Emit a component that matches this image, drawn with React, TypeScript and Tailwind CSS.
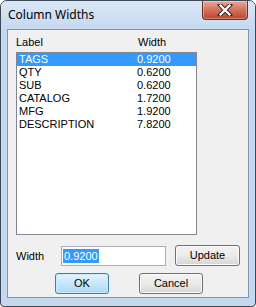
import React from 'react';

const rows = [
    { label: 'TAGS', width: '0.9200' },
    { label: 'QTY', width: '0.6200' },
    { label: 'SUB', width: '0.6200' },
    { label: 'CATALOG', width: '1.7200' },
    { label: 'MFG', width: '1.9200' },
    { label: 'DESCRIPTION', width: '7.8200' },
];

const sans = { fontFamily: '"Liberation Sans", Arial, sans-serif' };

const CloseButton = () => (
    <div className="relative w-[46px] h-[19px] rounded-b-[4px] border border-t-0 border-[#6d2a23] bg-gradient-to-b from-[#e9a99b] via-[#d3705c] to-[#c0432c] shadow-[inset_0_0_0_1px_rgba(255,255,255,0.35)] flex items-center justify-center">
        <svg width="16" height="12" viewBox="0 0 16 12">
            <path d="M3 1 L13 11 M13 1 L3 11" stroke="#3a2a2a" strokeWidth="4.2" strokeLinecap="square" />
            <path d="M3.5 1.5 L12.5 10.5 M12.5 1.5 L3.5 10.5" stroke="#ffffff" strokeWidth="2.2" strokeLinecap="square" />
        </svg>
    </div>
);

const Btn = ({ label, primary, w }: { label: string; primary?: boolean; w: string }) => (
    <div
        className={`${w} h-[21px] rounded-[3px] border flex items-center justify-center text-[11px] text-black ${
            primary
                ? 'border-[#3c7fb1] bg-gradient-to-b from-[#e5f4fc] to-[#a9daf5] shadow-[inset_0_0_0_1px_#c4ecff]'
                : 'border-[#707070] bg-gradient-to-b from-[#f2f2f2] via-[#ebebeb] to-[#d5d5d5] shadow-[inset_0_0_0_1px_#fcfcfc]'
        }`}
        style={sans}
    >
        {label}
    </div>
);

export default function App() {
    return (
        <div className="w-[256px] h-[307px] bg-white">
            <div className="w-[256px] h-[307px] rounded-t-[7px] rounded-b-[4px] border border-[#3a4858] bg-[#c4d8ef] flex flex-col">
                <div className="h-[28px] shrink-0 flex items-start justify-between rounded-t-[6px] bg-gradient-to-b from-[#dbe8f6] to-[#c6d9ef]">
                    <span className="pl-[7px] pt-[5px] text-[12px] text-black" style={{ fontFamily: '"Noto Sans", "Open Sans", sans-serif' }}>
                        Column Widths
                    </span>
                    <div className="mr-[7px]">
                        <CloseButton />
                    </div>
                </div>
                <div className="flex-1 px-[6px] pb-[8px] flex">
                    <div className="flex-1 border border-[#8095ad] bg-[#f0f0f0] flex flex-col text-[11px] text-black" style={sans}>
                        <div className="h-[22px] pl-[8px] pt-[4px] flex">
                            <span className="w-[122px]">Label</span>
                            <span>Width</span>
                        </div>
                        <div className="ml-[8px] w-[181px] h-[183px] border border-[#828790] bg-white">
                            {rows.map((r, i) => (
                                <div
                                    key={r.label}
                                    className={`h-[13px] leading-[13px] flex pl-[2px] ${i === 0 ? 'bg-[#3399ff] text-white' : ''}`}
                                >
                                    <span className="w-[118px]">{r.label}</span>
                                    <span>{r.width}</span>
                                </div>
                            ))}
                        </div>
                        <div className="mt-[10px] flex items-center">
                            <span className="ml-[8px] w-[45px] mt-[2px]">Width</span>
                            <div className="mt-[1px] w-[105px] h-[20px] border border-[#abadb3] bg-white flex items-center pl-[1px]">
                                <span className="bg-[#3399ff] text-white px-[1px] leading-[14px]">0.9200</span>
                            </div>
                            <div className="ml-[9px]">
                                <Btn label="Update" w="w-[65px]" />
                            </div>
                        </div>
                        <div className="mt-[7px] flex">
                            <div className="ml-[47px]">
                                <Btn label="OK" primary w="w-[54px]" />
                            </div>
                            <div className="ml-[30px]">
                                <Btn label="Cancel" w="w-[64px]" />
                            </div>
                        </div>
                    </div>
                </div>
            </div>
        </div>
    );
}
